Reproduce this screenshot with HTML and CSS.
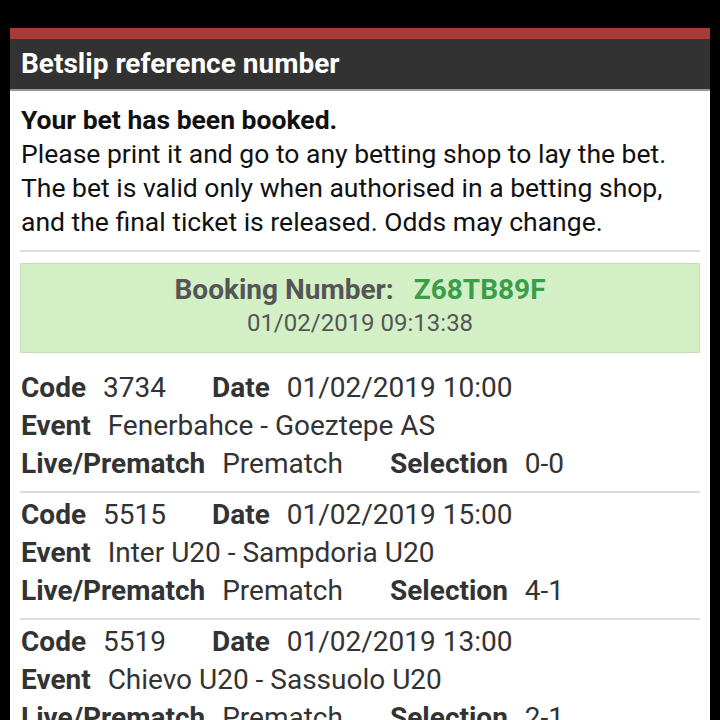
FILE: index.html
```html
<!DOCTYPE html>
<html lang="en">
<head>
  <meta charset="UTF-8">
  <meta name="viewport" content="width=device-width, initial-scale=1.0">
  <title>Betslip reference number</title>
  <link rel="stylesheet" href="styles.css">
</head>
<body>
  <div class="sheet">
    <div class="header">Betslip reference number</div>
    <div class="content">
      <div class="intro">
        <strong>Your bet has been booked.</strong><br>
        Please print it and go to any betting shop to lay the bet.<br>
        The bet is valid only when authorised in a betting shop,<br>
        and the final ticket is released. Odds may change.
      </div>

      <div class="booking">
        <div class="booking-line">Booking Number: <span class="booking-code">Z68TB89F</span></div>
        <div class="booking-date">01/02/2019 09:13:38</div>
      </div>

      <div class="bet">
        <div class="row">
          <span class="pair code"><b>Code</b> 3734</span>
          <span class="pair"><b>Date</b> 01/02/2019 10:00</span>
        </div>
        <div class="row"><span class="pair"><b>Event</b> Fenerbahce - Goeztepe AS</span></div>
        <div class="row">
          <span class="pair live"><b>Live/Prematch</b> Prematch</span>
          <span class="pair"><b>Selection</b> 0-0</span>
        </div>
      </div>

      <div class="bet">
        <div class="row">
          <span class="pair code"><b>Code</b> 5515</span>
          <span class="pair"><b>Date</b> 01/02/2019 15:00</span>
        </div>
        <div class="row"><span class="pair"><b>Event</b> Inter U20 - Sampdoria U20</span></div>
        <div class="row">
          <span class="pair live"><b>Live/Prematch</b> Prematch</span>
          <span class="pair"><b>Selection</b> 4-1</span>
        </div>
      </div>

      <div class="bet">
        <div class="row">
          <span class="pair code"><b>Code</b> 5519</span>
          <span class="pair"><b>Date</b> 01/02/2019 13:00</span>
        </div>
        <div class="row"><span class="pair"><b>Event</b> Chievo U20 - Sassuolo U20</span></div>
        <div class="row">
          <span class="pair live"><b>Live/Prematch</b> Prematch</span>
          <span class="pair"><b>Selection</b> 2-1</span>
        </div>
      </div>
    </div>
  </div>
</body>
</html>
```

FILE: styles.css
```css
body {
  margin: 0;
  background: #000;
  font-family: Roboto, "Liberation Sans", sans-serif;
  height: 720px;
  overflow: hidden;
}
.sheet {
  margin: 28px 10px 0;
  border-top: 11px solid #a83a3a;
  background: #fff;
}
.header {
  background: #323232;
  color: #fff;
  font-size: 28px;
  font-weight: 700;
  line-height: 50px;
  padding: 0 11px;
  border-bottom: 2px solid #999;
}
.content {
  padding: 0 10px;
}
.intro {
  color: #111;
  font-size: 26.5px;
  line-height: 34px;
  padding: 12px 1px 11px;
  border-bottom: 2px solid #ddd;
}
.booking {
  margin: 11px 0 13px;
  background: #d3efc6;
  border: 1px solid #c4dcb8;
  text-align: center;
  padding: 9px 0 13px;
}
.booking-line {
  font-size: 28px;
  font-weight: 700;
  color: #555;
  line-height: 34px;
}
.booking-code {
  color: #3a9d4a;
  margin-left: 13px;
}
.booking-date {
  font-size: 24px;
  color: #555;
  line-height: 32px;
}
.bet {
  padding: 3px 1px 8px;
  border-bottom: 2px solid #ddd;
  color: #333;
  font-size: 28px;
}
.row {
  display: flex;
  line-height: 38px;
}
.pair b {
  margin-right: 10px;
}
.code {
  width: 191px;
}
.live {
  width: 369px;
}
```
